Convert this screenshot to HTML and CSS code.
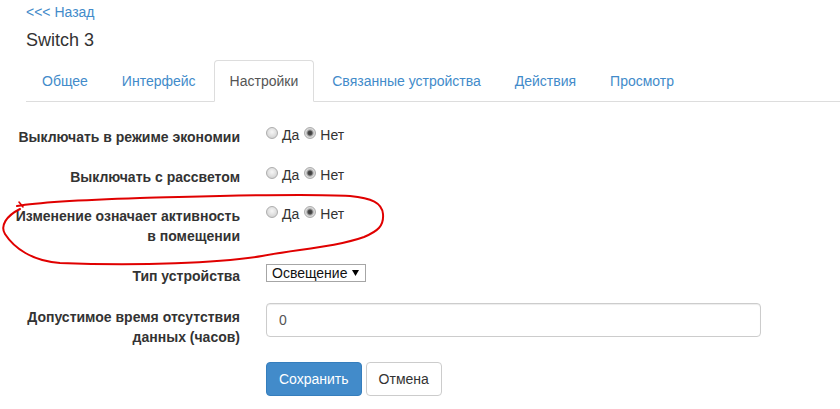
FILE: index.html
```html
<!DOCTYPE html>
<html lang="ru">
<head>
<meta charset="utf-8">
<title>Switch 3</title>
<link rel="stylesheet" href="styles.css">
</head>
<body>
<div class="page">
  <div class="head">
    <a class="back" href="#">&lt;&lt;&lt; Назад</a>
    <h4 class="title">Switch 3</h4>
    <ul class="tabs">
      <li><a href="#">Общее</a></li>
      <li><a href="#">Интерфейс</a></li>
      <li class="active"><a href="#">Настройки</a></li>
      <li><a href="#">Связанные устройства</a></li>
      <li><a href="#">Действия</a></li>
      <li><a href="#">Просмотр</a></li>
    </ul>
  </div>

  <form class="form">
    <div class="row row-1">
      <label class="lbl">Выключать в режиме экономии</label>
      <div class="radios">
        <label class="opt"><input type="radio" name="eco"><span>Да</span></label>
        <label class="opt"><input type="radio" name="eco" checked><span>Нет</span></label>
      </div>
    </div>
    <div class="row row-2">
      <label class="lbl">Выключать с рассветом</label>
      <div class="radios">
        <label class="opt"><input type="radio" name="dawn"><span>Да</span></label>
        <label class="opt"><input type="radio" name="dawn" checked><span>Нет</span></label>
      </div>
    </div>
    <div class="row row-3">
      <label class="lbl">Изменение означает активность в помещении</label>
      <div class="radios">
        <label class="opt"><input type="radio" name="act"><span>Да</span></label>
        <label class="opt"><input type="radio" name="act" checked><span>Нет</span></label>
      </div>
    </div>
    <div class="row row-4">
      <label class="lbl lbl-sel">Тип устройства</label>
      <div class="ctrl">
        <select class="sel">
          <option>Освещение</option>
        </select>
      </div>
    </div>
    <div class="row row-5">
      <label class="lbl lbl-inp">Допустимое время отсутствия данных (часов)</label>
      <div class="ctrl">
        <input class="inp" type="text" value="0">
      </div>
    </div>
    <div class="row row-btn">
      <div></div>
      <div class="btns">
        <button type="button" class="btn btn-primary">Сохранить</button>
        <button type="button" class="btn btn-default">Отмена</button>
      </div>
    </div>
  </form>

  <svg class="mark" width="840" height="409" viewBox="0 0 840 409" aria-hidden="true">
    <path d="M 17 206 C 40 202, 80 200, 140 198 C 220 196, 300 193, 350 196 C 372 198, 382 203, 383 214 C 384 226, 378 231, 364 237 C 336 247, 300 249, 262 256 C 220 263, 140 266, 60 263 C 32 261, 14 248, 5 234 C 0 226, 6 216, 20 209" fill="none" stroke="#e00000" stroke-width="2" stroke-linecap="round" stroke-linejoin="round"/>
    <path d="M 19 202 L 23 207" fill="none" stroke="#e00000" stroke-width="1.6" stroke-linecap="round"/>
  </svg>
</div>
</body>
</html>
```

FILE: styles.css
```css
html, body {
  margin: 0;
  padding: 0;
  background: #fff;
}

body {
  font-family: "Liberation Sans", Arial, Helvetica, sans-serif;
  font-size: 14px;
  line-height: 20px;
  color: #333;
}

.page {
  position: relative;
  width: 840px;
  height: 409px;
  overflow: hidden;
}

.head {
  padding: 2px 0 0 26px;
}

.back {
  display: block;
  color: #428bca;
  text-decoration: none;
  line-height: 20px;
}

.title {
  margin: 8px 0 0;
  font-size: 18px;
  font-weight: normal;
  line-height: 20px;
  color: #333;
}

.tabs {
  list-style: none;
  margin: 10px 0 0;
  padding: 0;
  display: flex;
  border-bottom: 1px solid #ddd;
}

.tabs li {
  margin-bottom: -1px;
}

.tabs a {
  display: block;
  padding: 10px 15px;
  margin-right: 2px;
  line-height: 20px;
  border: 1px solid transparent;
  border-radius: 4px 4px 0 0;
  color: #428bca;
  text-decoration: none;
}

.tabs .active a {
  color: #555;
  background: #fff;
  border-color: #ddd #ddd transparent;
}

.form {
  margin: 25px 0 0;
}

.row {
  display: grid;
  grid-template-columns: 240px 495px;
  column-gap: 26px;
  align-items: start;
}

.row-1 { margin-bottom: 20px; }
.row-2 { margin-bottom: 19px; }
.row-3 { margin-bottom: 18px; }
.row-4 { margin-bottom: 17px; }
.row-5 { margin-bottom: 15px; }

.lbl {
  display: block;
  padding-left: 12px;
  text-align: right;
  font-weight: bold;
  line-height: 20px;
  color: #333;
}

.lbl-sel { padding-top: 2px; }
.lbl-inp { padding-top: 4px; }

.radios {
  display: flex;
  margin-top: -2px;
  line-height: 20px;
}

.opt {
  display: flex;
  align-items: flex-start;
  margin-right: 5px;
  color: #333;
}

.opt input {
  appearance: none;
  -webkit-appearance: none;
  width: 12px;
  height: 12px;
  margin: 2px 4px 0 0;
  border: 1px solid #adadad;
  border-radius: 50%;
  background: radial-gradient(circle at 50% 40%, #f6f6f6 0%, #dedede 55%, #c6c6c6 100%);
  box-sizing: border-box;
}

.opt input:checked {
  background: radial-gradient(circle at 50% 50%, #3a3a3a 0, #4c4c4c 2px, #a2a2a2 3px, #dcdcdc 4.2px, #cbcbcb 6px);
}

.sel {
  appearance: none;
  -webkit-appearance: none;
  display: block;
  width: 100px;
  height: 18px;
  margin: 0;
  padding: 0 14px 0 5px;
  border: 1px solid #a6a6a6;
  border-radius: 0;
  font-family: "Liberation Sans", Arial, sans-serif;
  font-size: 14px;
  line-height: 16px;
  color: #111;
  background: #fff url("data:image/svg+xml,%3Csvg xmlns='http://www.w3.org/2000/svg' width='7' height='6'%3E%3Cpath d='M0 0H7L3.5 6Z' fill='%23000'/%3E%3C/svg%3E") no-repeat right 6px center;
}

.inp {
  display: block;
  width: 495px;
  height: 34px;
  box-sizing: border-box;
  padding: 6px 12px;
  border: 1px solid #ccc;
  border-radius: 4px;
  box-shadow: inset 0 1px 1px rgba(0, 0, 0, 0.075);
  font-family: "Liberation Sans", Arial, sans-serif;
  font-size: 14px;
  line-height: 20px;
  color: #555;
  margin: 0;
}

.btns {
  display: flex;
  gap: 4px;
}

.btn {
  height: 34px;
  box-sizing: border-box;
  padding: 6px 12px;
  border: 1px solid transparent;
  border-radius: 4px;
  font-family: "Liberation Sans", Arial, sans-serif;
  font-size: 14px;
  line-height: 20px;
  margin: 0;
}

.btn-primary {
  background: #428bca;
  border-color: #357ebd;
  color: #fff;
}

.btn-default {
  background: #fff;
  border-color: #ccc;
  color: #333;
}

.mark {
  position: absolute;
  left: 0;
  top: 0;
  pointer-events: none;
}
```
